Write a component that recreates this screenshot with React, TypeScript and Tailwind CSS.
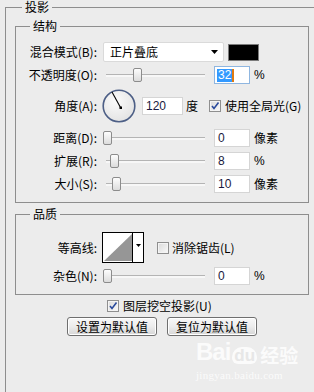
import React from 'react'

const font = { fontFamily: '"Noto Sans CJK SC", "Liberation Sans", sans-serif' }

function Label({ children }: { children: React.ReactNode }) {
  return <div className="w-[81px] shrink-0 text-right leading-[14px] whitespace-nowrap">{children}</div>
}

function Slider({ pos }: { pos: number }) {
  return (
    <div className="ml-[9px] relative w-[99px] h-[3px] border-t border-[#b4b4b4] bg-[#f7f7f7]">
      <div
        className="absolute top-[-7px] w-[9px] h-[14px] rounded-[2px] border border-[#8c8c8c] bg-gradient-to-b from-[#fdfdfd] to-[#dcdcdc]"
        style={{ left: pos }}
      />
    </div>
  )
}

function Field({ value, w = 36 }: { value: string; w?: number }) {
  return (
    <div
      className="h-[18px] bg-white border border-[#d5d5d5] pl-[3px] text-[12px] leading-[16px] text-[#1a1a40] font-['Liberation_Sans']"
      style={{ width: w }}
    >
      {value}
    </div>
  )
}

function Check({ checked }: { checked?: boolean }) {
  return (
    <svg width="12" height="12" viewBox="0 0 12 12" className="shrink-0">
      <defs>
        <linearGradient id="cb" x1="0" y1="0" x2="1" y2="1">
          <stop offset="0" stopColor="#d8d8d8" />
          <stop offset="1" stopColor="#fbfbfb" />
        </linearGradient>
      </defs>
      <rect x="0.5" y="0.5" width="11" height="11" fill="url(#cb)" stroke="#8f8f8f" />
      <rect x="1.5" y="1.5" width="9" height="9" fill="none" stroke="#f4f4f4" />
      {checked && <path d="M3 6 L5 8.5 L9.5 2.5" fill="none" stroke="#2a4a9c" strokeWidth="1.6" />}
    </svg>
  )
}

function Dial() {
  return (
    <svg width="34" height="34" viewBox="0 0 34 34" className="ml-[5px] shrink-0">
      <defs>
        <radialGradient id="dg" cx="0.4" cy="0.35" r="0.7">
          <stop offset="0" stopColor="#fbfbfb" />
          <stop offset="1" stopColor="#e2e2e2" />
        </radialGradient>
      </defs>
      <circle cx="17" cy="17" r="15.8" fill="url(#dg)" stroke="#4d5f86" strokeWidth="1.6" />
      <line x1="18.5" y1="18.5" x2="10" y2="3" stroke="#000" strokeWidth="1.1" />
      <rect x="17.5" y="17.5" width="2.5" height="2.5" fill="#000" />
    </svg>
  )
}

function Contour() {
  return (
    <svg width="42" height="31" viewBox="0 0 42 31" className="ml-[5px] shrink-0">
      <rect x="0.5" y="0.5" width="41" height="30" fill="#fff" stroke="#000" />
      <polygon points="2,29 30,2 30,29" fill="#969696" />
      <line x1="30.5" y1="1" x2="30.5" y2="30" stroke="#000" />
      <polygon points="34,12 39,12 36.5,15" fill="#000" />
    </svg>
  )
}

function Button({ children }: { children: React.ReactNode }) {
  return (
    <div className="w-[90px] h-[19px] rounded-[3px] border border-[#6f6f6f] bg-gradient-to-b from-[#f8f8f8] via-[#ececec] to-[#d6d6d6] shadow-[inset_0_0_0_1px_#ffffff] text-center leading-[17px]">
      {children}
    </div>
  )
}

export default function App() {
  return (
    <div className="relative w-[314px] h-[392px] overflow-hidden bg-[#ececec] text-[12px] text-black" style={font}>
      <fieldset className="ml-[5px] w-[330px] border-l border-t border-[#8e8e8e] pb-[120px]">
        <legend className="ml-[16px] px-[3px] leading-[14px]">投影</legend>

        <fieldset className="ml-[9px] mt-[5px] w-[294px] border border-[#8e8e8e] pt-[9px] pb-[9px]">
          <legend className="ml-[14px] px-[3px] leading-[14px]">结构</legend>

          <div className="flex items-center h-[20px]">
            <Label>混合模式(B):</Label>
            <div className="ml-[6px] w-[121px] h-[20px] bg-white border border-[#dadada] rounded-[2px] flex items-center pl-[6px] pr-[4px]">
              <span className="flex-1 leading-[14px]">正片叠底</span>
              <svg width="8" height="5" viewBox="0 0 8 5">
                <polygon points="0,0 7,0 3.5,4" fill="#000" />
              </svg>
            </div>
            <div className="ml-[4px] w-[31px] h-[17px] bg-black border border-[#7c7c7c]" />
          </div>

          <div className="flex items-center h-[18px] mt-[4px]">
            <Label>不透明度(O):</Label>
            <Slider pos={27} />
            <div className="ml-[9px] w-[36px] h-[18px] bg-white border border-[#8fb6e0] flex items-center pl-[2px] font-['Liberation_Sans']">
              <span className="bg-[#3399ff] text-white leading-[13px] px-[1px]">32</span>
              <span className="w-[2px] h-[13px] bg-[#e07a10]" />
            </div>
            <span className="ml-[4px] font-['Liberation_Sans']">%</span>
          </div>

          <div className="flex items-center h-[33px] mt-[5px]">
            <Label>角度(A):</Label>
            <Dial />
            <div className="ml-[6px]">
              <Field value="120" w={41} />
            </div>
            <span className="ml-[3px] leading-[14px]">度</span>
            <div className="ml-[11px] flex items-center">
              <Check checked />
            </div>
            <span className="ml-[4px] leading-[14px] whitespace-nowrap">使用全局光(G)</span>
          </div>

          <div className="flex items-center h-[18px] mt-[7px]">
            <Label>距离(D):</Label>
            <Slider pos={-3} />
            <div className="ml-[9px]">
              <Field value="0" />
            </div>
            <span className="ml-[4px] leading-[14px]">像素</span>
          </div>

          <div className="flex items-center h-[18px] mt-[5px]">
            <Label>扩展(R):</Label>
            <Slider pos={4} />
            <div className="ml-[9px]">
              <Field value="8" />
            </div>
            <span className="ml-[4px] font-['Liberation_Sans']">%</span>
          </div>

          <div className="flex items-center h-[18px] mt-[5px]">
            <Label>大小(S):</Label>
            <Slider pos={6} />
            <div className="ml-[9px]">
              <Field value="10" />
            </div>
            <span className="ml-[4px] leading-[14px]">像素</span>
          </div>
        </fieldset>

        <fieldset className="ml-[9px] mt-[4px] w-[294px] border border-[#8e8e8e] pt-[11px] pb-[9px]">
          <legend className="ml-[14px] px-[3px] leading-[14px]">品质</legend>

          <div className="flex items-center h-[31px]">
            <Label>等高线:</Label>
            <Contour />
            <div className="ml-[13px] flex items-center">
              <Check />
            </div>
            <span className="ml-[3px] leading-[14px] whitespace-nowrap">消除锯齿(L)</span>
          </div>

          <div className="flex items-center h-[18px] mt-[4px]">
            <Label>杂色(N):</Label>
            <Slider pos={-3} />
            <div className="ml-[9px]">
              <Field value="0" />
            </div>
            <span className="ml-[4px] font-['Liberation_Sans']">%</span>
          </div>
        </fieldset>

        <div className="flex items-center h-[12px] mt-[5px] pl-[101px]">
          <Check checked />
          <span className="ml-[4px] leading-[14px] whitespace-nowrap">图层挖空投影(U)</span>
        </div>

        <div className="flex mt-[5px] pl-[61px] gap-[10px]">
          <Button>设置为默认值</Button>
          <Button>复位为默认值</Button>
        </div>
      </fieldset>

      {/* watermark */}
      <div className="absolute left-[196px] top-[340px] text-white opacity-80 select-none">
        <div className="flex items-end leading-none">
          <span className="text-[24px] font-bold font-['Liberation_Sans'] tracking-[-1px]">Bai</span>
          <span className="ml-[2px] rounded-t-[10px] rounded-b-[6px] bg-white text-[#e6e6e6] text-[17px] font-bold px-[2px] font-['Liberation_Sans']">du</span>
          <span className="ml-[3px] text-[19px] font-bold">经验</span>
        </div>
        <div className="mt-[3px] text-[11px] font-['Liberation_Serif'] tracking-[0.3px]">jingyan.baidu.com</div>
      </div>
    </div>
  )
}
